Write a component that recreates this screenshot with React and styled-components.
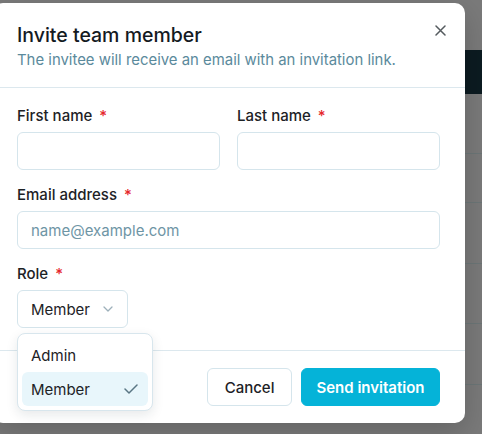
import React from "react";
import styled, { createGlobalStyle } from "styled-components";

const GlobalStyle = createGlobalStyle`
  html, body { margin: 0; padding: 0; }
  body {
    background: #7a7a7a;
    font-family: Inter, "Noto Sans", sans-serif;
    overflow: hidden;
    -webkit-font-smoothing: antialiased;
  }
  * { box-sizing: border-box; }
`;

const Screen = styled.div`
  position: relative;
  width: 482px;
  height: 434px;
  overflow: hidden;
  background: #7a7a7a;
`;

const Backdrop = styled.div`
  display: flex;
  flex-direction: column;
  padding-top: 50px;
`;

const DarkBar = styled.div`
  height: 44px;
  background: #0c1b21;
`;

const BgRow = styled.div`
  height: ${(p) => p.$h}px;
  border-bottom: 1px solid #6c7677;
`;

const Modal = styled.div`
  position: absolute;
  top: 3px;
  left: -7px;
  width: 472px;
  height: 420px;
  background: #ffffff;
  border-radius: 10px;
  box-shadow: 0 10px 30px rgba(0, 0, 0, 0.18);
  display: flex;
  flex-direction: column;
`;

const Header = styled.div`
  padding: 18px 25px 16px 24px;
  border-bottom: 1px solid #dce8ee;
`;

const Title = styled.h2`
  margin: 0;
  font-size: 19.5px;
  line-height: 28px;
  font-weight: 500;
  color: #141a1f;
`;

const Subtitle = styled.p`
  margin: 0;
  font-size: 14.9px;
  line-height: 22px;
  color: #5b8a9c;
`;

const CloseButton = styled.button`
  position: absolute;
  top: 20px;
  right: 18px;
  width: 14px;
  height: 14px;
  padding: 0;
  border: none;
  background: none;
  display: flex;
  align-items: center;
  justify-content: center;
  color: #555b5f;
  cursor: pointer;
`;

const Body = styled.div`
  position: relative;
  padding: 18px 25px 22px 24px;
  display: flex;
  flex-direction: column;
  gap: 15px;
  border-bottom: 1px solid #dce8ee;
`;

const Row = styled.div`
  display: grid;
  grid-template-columns: 1fr 1fr;
  gap: 17px;
`;

const Field = styled.div`
  display: flex;
  flex-direction: column;
  gap: 6px;
  position: relative;
`;

const Label = styled.label`
  font-size: 15px;
  line-height: 20px;
  font-weight: 500;
  color: #1d2226;
`;

const Required = styled.span`
  color: #e5262b;
  margin-left: 7px;
`;

const Input = styled.input`
  height: 38px;
  width: 100%;
  border: 1px solid #d5e5ec;
  border-radius: 6px;
  padding: 0 13px;
  font-family: inherit;
  font-size: 15px;
  color: #1d2226;
  outline: none;
  &::placeholder { color: #6e95a5; }
`;

const SelectButton = styled.button`
  height: 38px;
  align-self: flex-start;
  width: 111px;
  display: flex;
  align-items: center;
  gap: 13px;
  padding: 0 13px;
  border: 1px solid #d5e5ec;
  border-radius: 6px;
  background: #fff;
  font-family: inherit;
  font-size: 15px;
  color: #1d2226;
`;

const Menu = styled.div`
  position: absolute;
  top: 69px;
  left: 0;
  width: 136px;
  padding: 4px;
  background: #fff;
  border: 1px solid #d8e6ed;
  border-radius: 8px;
  box-shadow: 0 4px 12px rgba(20, 40, 50, 0.1);
  z-index: 2;
`;

const MenuItem = styled.div`
  height: 34px;
  display: flex;
  align-items: center;
  justify-content: space-between;
  padding: 0 10px 0 9px;
  border-radius: 6px;
  font-size: 15px;
  color: #1d2226;
  background: ${(p) => (p.$active ? "#e8f6fb" : "transparent")};
`;

const Footer = styled.div`
  padding: 17px 25px 17px 24px;
  display: flex;
  justify-content: flex-end;
  gap: 9px;
`;

const Button = styled.button`
  height: 38px;
  padding: 0 ${(p) => (p.$primary ? 14.5 : 16.5)}px;
  border-radius: 6px;
  font-family: inherit;
  font-size: 15px;
  font-weight: ${(p) => (p.$primary ? 600 : 500)};
  border: 1px solid ${(p) => (p.$primary ? "#05b3d8" : "#d5e5ec")};
  background: ${(p) => (p.$primary ? "#05b3d8" : "#fff")};
  color: ${(p) => (p.$primary ? "#fff" : "#1d2226")};
`;

const Chevron = () => (
  <svg width="10" height="6" viewBox="0 0 10 6" fill="none">
    <path d="M1 1l4 4 4-4" stroke="#9db0ba" strokeWidth="1.3" strokeLinecap="round" strokeLinejoin="round" />
  </svg>
);

const Check = () => (
  <svg width="14" height="10" viewBox="0 0 14 10" fill="none">
    <path d="M1 5l4 4 8-8" stroke="#5a7684" strokeWidth="1.5" strokeLinecap="round" strokeLinejoin="round" />
  </svg>
);

const CloseIcon = () => (
  <svg width="11" height="11" viewBox="0 0 11 11" fill="none">
    <path d="M1 1l9 9M10 1l-9 9" stroke="currentColor" strokeWidth="1.5" strokeLinecap="round" />
  </svg>
);

export default function App() {
  return (
    <>
      <GlobalStyle />
      <Screen>
        <Backdrop>
          <DarkBar />
          <BgRow $h={60} />
          <BgRow $h={49} />
          <BgRow $h={61} />
          <BgRow $h={60} />
          <BgRow $h={61} />
        </Backdrop>
        <Modal>
          <Header>
            <Title>Invite team member</Title>
            <Subtitle>The invitee will receive an email with an invitation link.</Subtitle>
          </Header>
          <CloseButton aria-label="Close">
            <CloseIcon />
          </CloseButton>
          <Body>
            <Row>
              <Field>
                <Label>First name<Required>*</Required></Label>
                <Input />
              </Field>
              <Field>
                <Label>Last name<Required>*</Required></Label>
                <Input />
              </Field>
            </Row>
            <Field>
              <Label>Email address<Required>*</Required></Label>
              <Input placeholder="name@example.com" />
            </Field>
            <Field>
              <Label>Role<Required>*</Required></Label>
              <SelectButton>
                Member
                <Chevron />
              </SelectButton>
              <Menu>
                <MenuItem>Admin</MenuItem>
                <MenuItem $active>
                  Member
                  <Check />
                </MenuItem>
              </Menu>
            </Field>
          </Body>
          <Footer>
            <Button>Cancel</Button>
            <Button $primary>Send invitation</Button>
          </Footer>
        </Modal>
      </Screen>
    </>
  );
}
